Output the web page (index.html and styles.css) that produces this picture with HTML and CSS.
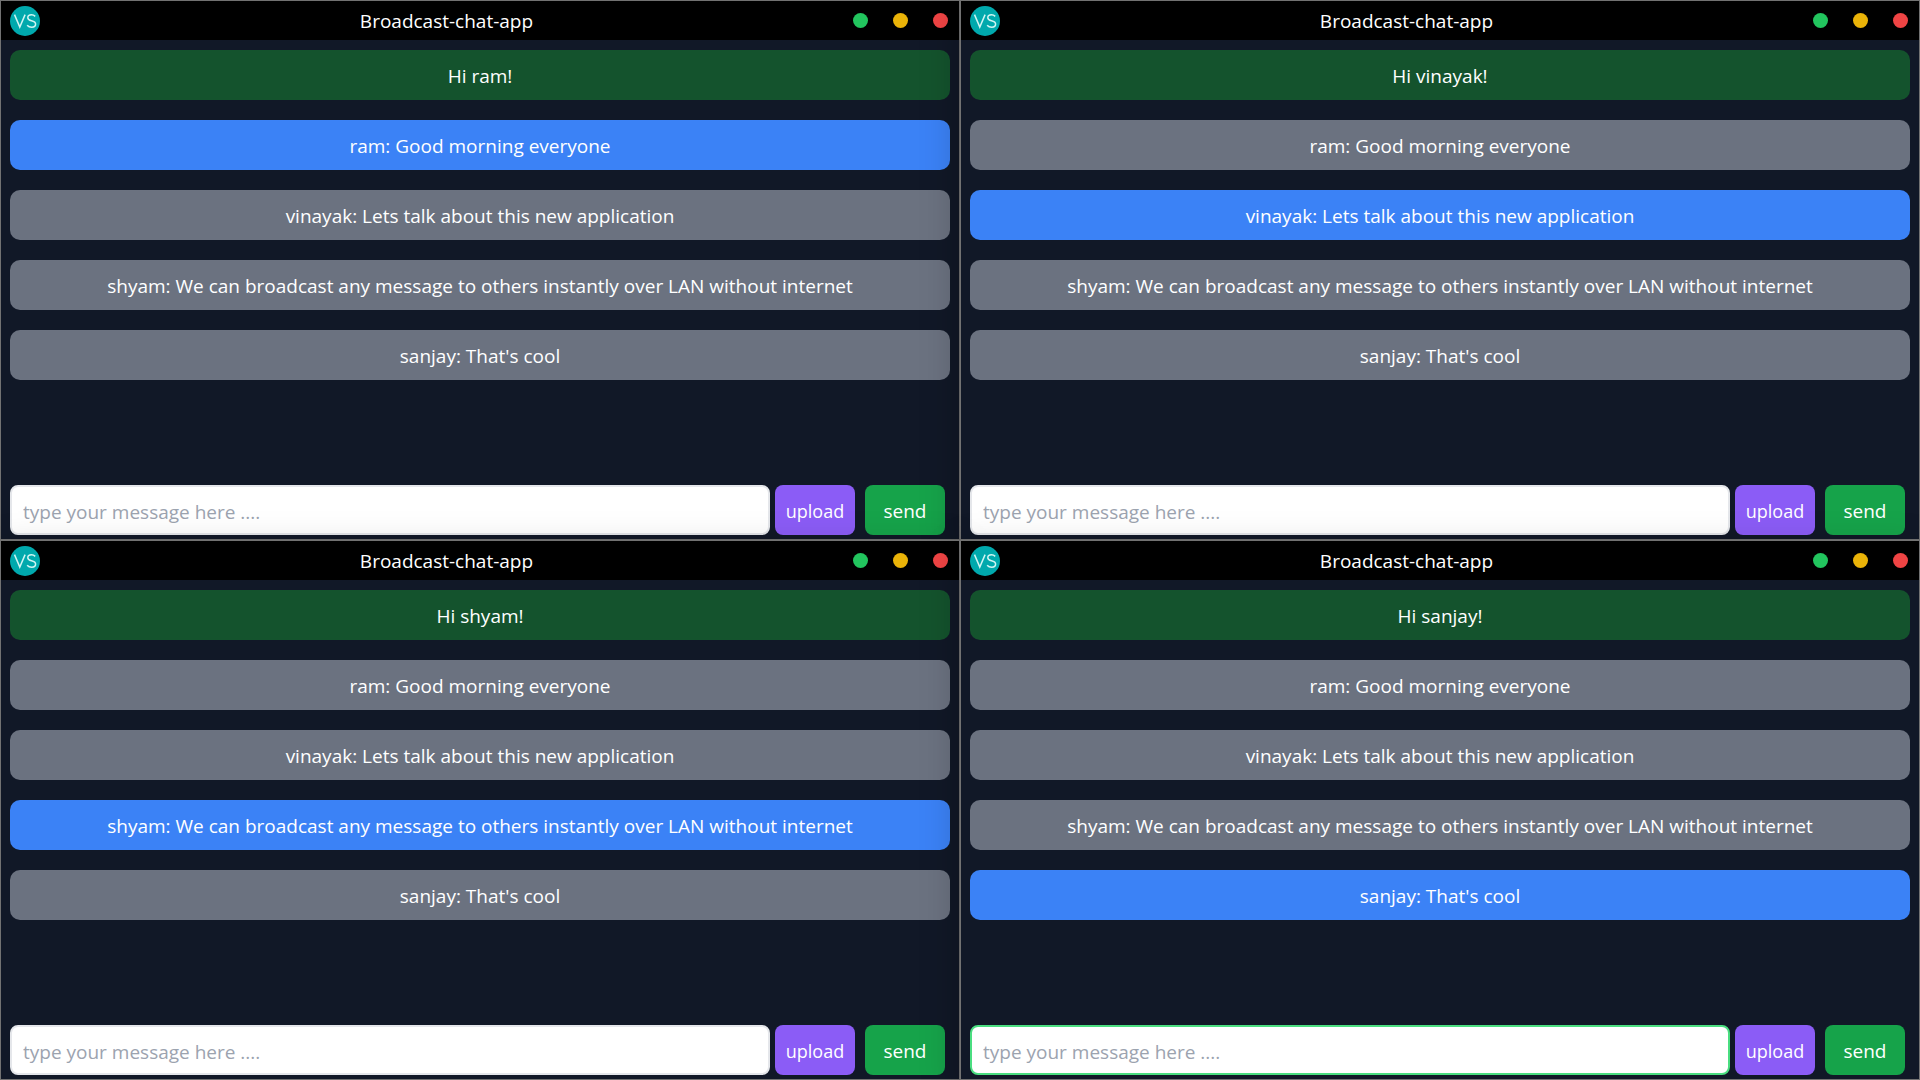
FILE: index.html
```html
<!DOCTYPE html>
<html lang="en">
<head>
<meta charset="utf-8">
<meta name="viewport" content="width=device-width, initial-scale=1">
<title>Broadcast-chat-app</title>
<link rel="stylesheet" href="styles.css">
</head>
<body>
<svg class="defs" aria-hidden="true">
  <symbol id="logo" viewBox="0 0 30 30">
    <circle cx="15" cy="15" r="15" fill="#00a9ad"/>
    <path d="M4.5 8.6 L9.8 21 L15.1 8.6 M25.2 10.4 C24 9.2 22.8 8.8 21.5 8.8 C19.3 8.8 17.8 10 17.8 11.8 C17.8 13.7 19.3 14.3 21.5 14.8 C24 15.4 25.6 16.1 25.6 18 C25.6 19.9 24 21.2 21.7 21.2 C19.9 21.2 18.3 20.5 17.1 19.2" fill="none" stroke="#d0f5f2" stroke-width="1.5"/>
  </symbol>
</svg>
<main class="desktop">
  <section class="window">
    <header class="titlebar">
      <svg class="logo" role="img" aria-label="VS"><use href="#logo"/></svg>
      <h1 class="title">Broadcast-chat-app</h1>
      <div class="controls">
        <button class="dot dot-green" type="button" aria-label="Minimize"></button>
        <button class="dot dot-yellow" type="button" aria-label="Maximize"></button>
        <button class="dot dot-red" type="button" aria-label="Close"></button>
      </div>
    </header>
    <div class="messages">
      <p class="message greeting">Hi ram!</p>
      <p class="message own">ram: Good morning everyone</p>
      <p class="message">vinayak: Lets talk about this new application</p>
      <p class="message">shyam: We can broadcast any message to others instantly over LAN without internet</p>
      <p class="message">sanjay: That's cool</p>
    </div>
    <form class="composer">
      <input class="entry" type="text" placeholder="type your message here ...." aria-label="Message">
      <button class="btn upload" type="button">upload</button>
      <button class="btn send" type="button">send</button>
    </form>
  </section>

  <section class="window">
    <header class="titlebar">
      <svg class="logo" role="img" aria-label="VS"><use href="#logo"/></svg>
      <h1 class="title">Broadcast-chat-app</h1>
      <div class="controls">
        <button class="dot dot-green" type="button" aria-label="Minimize"></button>
        <button class="dot dot-yellow" type="button" aria-label="Maximize"></button>
        <button class="dot dot-red" type="button" aria-label="Close"></button>
      </div>
    </header>
    <div class="messages">
      <p class="message greeting">Hi vinayak!</p>
      <p class="message">ram: Good morning everyone</p>
      <p class="message own">vinayak: Lets talk about this new application</p>
      <p class="message">shyam: We can broadcast any message to others instantly over LAN without internet</p>
      <p class="message">sanjay: That's cool</p>
    </div>
    <form class="composer">
      <input class="entry" type="text" placeholder="type your message here ...." aria-label="Message">
      <button class="btn upload" type="button">upload</button>
      <button class="btn send" type="button">send</button>
    </form>
  </section>

  <section class="window">
    <header class="titlebar">
      <svg class="logo" role="img" aria-label="VS"><use href="#logo"/></svg>
      <h1 class="title">Broadcast-chat-app</h1>
      <div class="controls">
        <button class="dot dot-green" type="button" aria-label="Minimize"></button>
        <button class="dot dot-yellow" type="button" aria-label="Maximize"></button>
        <button class="dot dot-red" type="button" aria-label="Close"></button>
      </div>
    </header>
    <div class="messages">
      <p class="message greeting">Hi shyam!</p>
      <p class="message">ram: Good morning everyone</p>
      <p class="message">vinayak: Lets talk about this new application</p>
      <p class="message own">shyam: We can broadcast any message to others instantly over LAN without internet</p>
      <p class="message">sanjay: That's cool</p>
    </div>
    <form class="composer">
      <input class="entry" type="text" placeholder="type your message here ...." aria-label="Message">
      <button class="btn upload" type="button">upload</button>
      <button class="btn send" type="button">send</button>
    </form>
  </section>

  <section class="window">
    <header class="titlebar">
      <svg class="logo" role="img" aria-label="VS"><use href="#logo"/></svg>
      <h1 class="title">Broadcast-chat-app</h1>
      <div class="controls">
        <button class="dot dot-green" type="button" aria-label="Minimize"></button>
        <button class="dot dot-yellow" type="button" aria-label="Maximize"></button>
        <button class="dot dot-red" type="button" aria-label="Close"></button>
      </div>
    </header>
    <div class="messages">
      <p class="message greeting">Hi sanjay!</p>
      <p class="message">ram: Good morning everyone</p>
      <p class="message">vinayak: Lets talk about this new application</p>
      <p class="message">shyam: We can broadcast any message to others instantly over LAN without internet</p>
      <p class="message own">sanjay: That's cool</p>
    </div>
    <form class="composer">
      <input class="entry active" type="text" placeholder="type your message here ...." aria-label="Message">
      <button class="btn upload" type="button">upload</button>
      <button class="btn send" type="button">send</button>
    </form>
  </section>
</main>
</body>
</html>
```
FILE: styles.css
```css
* {
  box-sizing: border-box;
}

body {
  margin: 0;
  background: #111827;
  color: #fff;
  font-family: "Segoe UI", "Open Sans", "Noto Sans", sans-serif;
  font-size: 19px;
  line-height: 30px;
}

.defs {
  display: none;
}

.desktop {
  display: grid;
  grid-template-columns: repeat(2, minmax(0, 1fr));
  grid-auto-rows: 1fr;
  min-height: 100vh;
  overflow: hidden;
}

.window {
  display: flex;
  flex-direction: column;
  border: 1px solid #727272;
  background: #111827;
  box-shadow: 0 12px 36px rgba(0, 0, 0, 0.25);
}

.titlebar {
  display: flex;
  align-items: center;
  justify-content: space-between;
  height: 39px;
  padding: 0 11px 0 9px;
  background: #000;
}

.logo {
  width: 30px;
  height: 30px;
}

.title {
  margin: 0;
  padding-top: 1px;
  font-size: 19px;
  font-weight: 400;
}

.controls {
  display: flex;
  gap: 25px;
}

.dot {
  width: 15px;
  height: 15px;
  padding: 0;
  border: 0;
  border-radius: 50%;
}

.dot-green {
  background: #22c55e;
}

.dot-yellow {
  background: #eab308;
}

.dot-red {
  background: #ef4444;
}

.messages {
  display: flex;
  flex: 1;
  flex-direction: column;
  gap: 20px;
  padding: 10px 9px;
}

.message {
  margin: 0;
  padding: 11px 10px 9px;
  border-radius: 10px;
  background: #6b7280;
  text-align: center;
}

.greeting {
  background: #14532d;
}

.own {
  background: #3b82f6;
}

.composer {
  display: flex;
  padding: 0 14px 4px 9px;
}

.entry,
.btn {
  height: 50px;
  border-radius: 8px;
  font-family: inherit;
}

.entry {
  flex: 1;
  min-width: 0;
  margin-right: 5px;
  padding: 3px 11px 0;
  border: 2px solid #e5e7eb;
  background: #fff;
  color: #111827;
  font-size: 19px;
}

.entry::placeholder {
  color: #9ca3af;
  opacity: 1;
}

.entry.active {
  border-color: #4ade80;
}

.btn {
  width: 80px;
  padding: 2px 0 0;
  border: 0;
  color: #fff;
}

.upload {
  margin-right: 10px;
  background: #8b5cf6;
  font-size: 18px;
}

.send {
  background: #16a34a;
  font-size: 19px;
  font-weight: 500;
}
```
